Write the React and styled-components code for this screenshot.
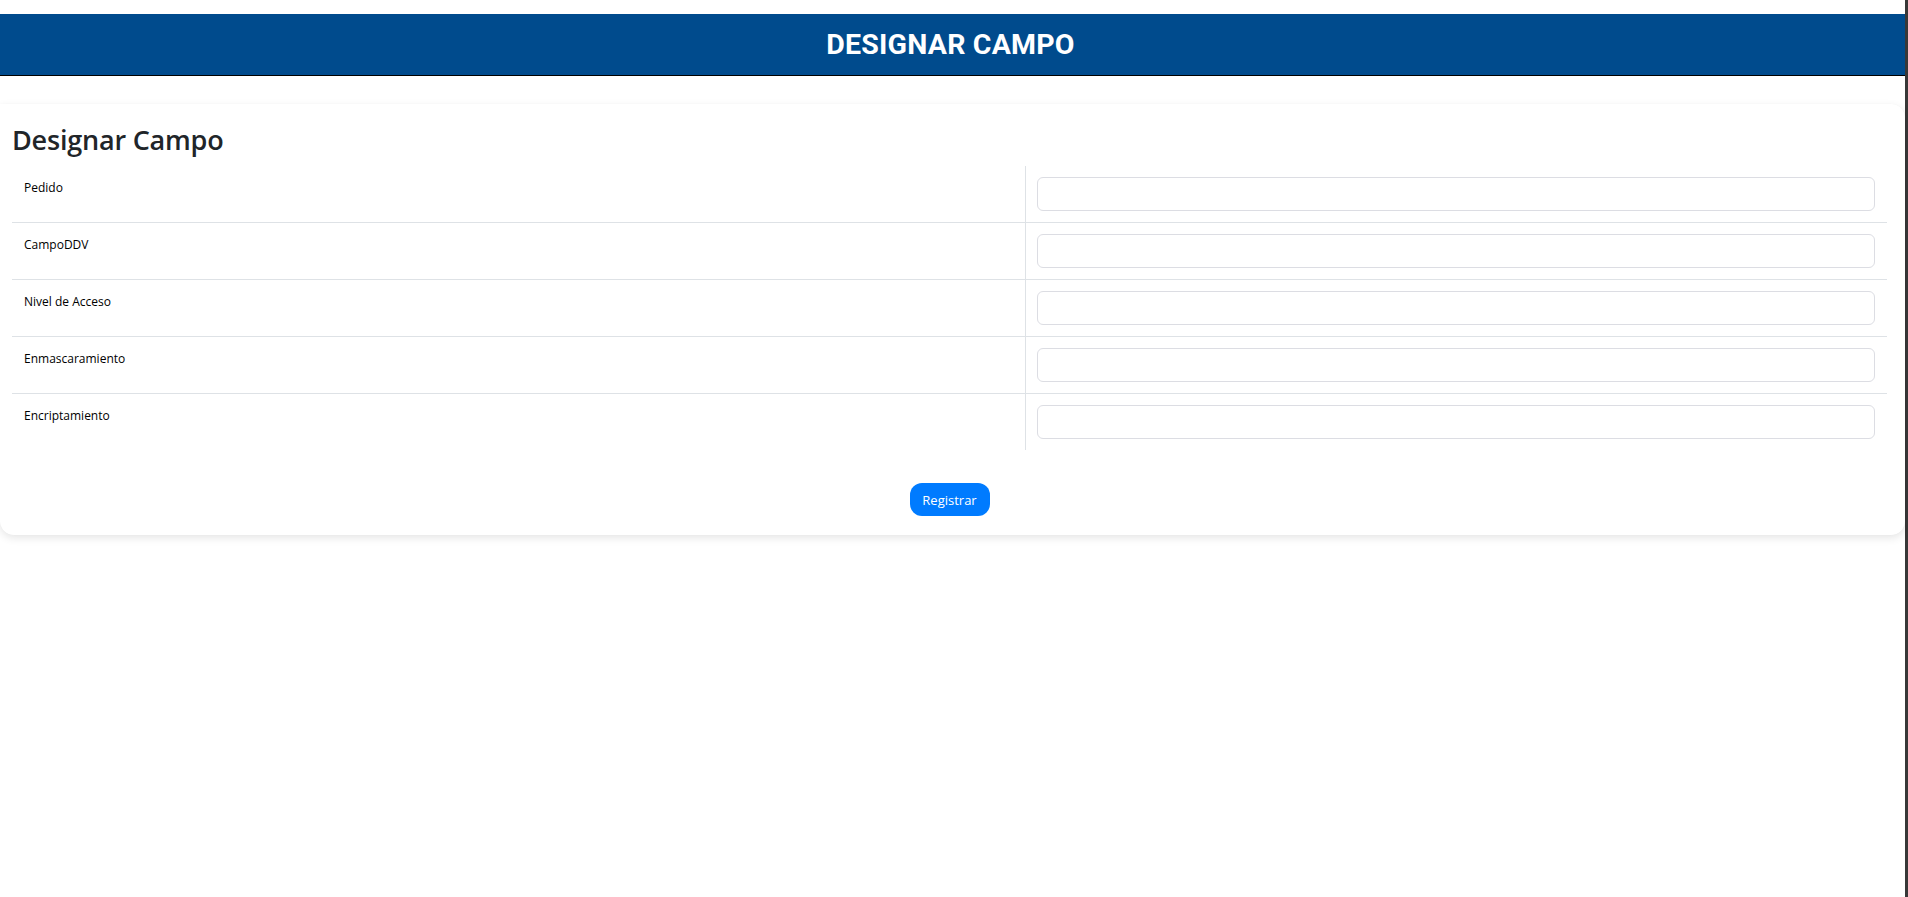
import React from 'react';
import styled, { createGlobalStyle } from 'styled-components';

const GlobalStyle = createGlobalStyle`
	html, body {
		margin: 0;
		padding: 0;
		background: #ffffff;
	}

	* {
		box-sizing: border-box;
	}
`;

const Page = styled.div`
	min-height: 100vh;
	width: 1908px;
	border-right: 3px solid #383838;
	padding-top: 14px;
	font-family: 'Open Sans', 'Noto Sans', sans-serif;
`;

const Header = styled.header`
	height: 62px;
	background: #004b8d;
	border-bottom: 1px solid #000000;
	display: flex;
	align-items: center;
	justify-content: center;
`;

const HeaderTitle = styled.h1`
	margin: 0 4px 0 0;
	color: #ffffff;
	font-family: Roboto, 'Liberation Sans', sans-serif;
	font-weight: 700;
	font-size: 28.5px;
	letter-spacing: 0.2px;
`;

const Card = styled.section`
	margin-top: 28px;
	background: #ffffff;
	border-radius: 0 14px 14px 14px;
	box-shadow: 0 3px 8px rgba(0, 0, 0, 0.1), 0 0 1px rgba(0, 0, 0, 0.04);
	padding: 19px 18px 19px 12px;
`;

const Title = styled.h2`
	margin: 0 0 9px 0;
	font-size: 27px;
	font-weight: 600;
	color: #212529;
	line-height: 34px;
	letter-spacing: -0.2px;
`;

const Table = styled.div`
	display: grid;
	grid-template-columns: 1013px 1fr;
`;

const Cell = styled.div`
	padding: 11px ${(p) => (p.right ? '12px 11px 11px' : '12px')};
	border-top: ${(p) => (p.first ? 'none' : '1px solid #dee2e6')};
	border-left: ${(p) => (p.right ? '1px solid #dee2e6' : 'none')};
`;

const Label = styled.span`
	display: block;
	font-size: 12px;
	line-height: 21px;
	color: #000000;
`;

const Input = styled.input`
	display: block;
	width: 100%;
	height: 34px;
	border: 1px solid #dcdde3;
	border-radius: 6px;
	background: #ffffff;
	outline: none;
	font-size: 14px;
	padding: 6px 12px;
`;

const Actions = styled.div`
	display: flex;
	justify-content: center;
	margin-top: 33px;
`;

const Button = styled.button`
	width: 80px;
	height: 33px;
	border: none;
	border-radius: 12px;
	background: #007bff;
	color: #ffffff;
	font-family: 'Open Sans', 'Noto Sans', sans-serif;
	font-size: 13px;
	cursor: pointer;
`;

const fields = ['Pedido', 'CampoDDV', 'Nivel de Acceso', 'Enmascaramiento', 'Encriptamiento'];

function App() {
  return (
    <Page>
      <GlobalStyle />
      <Header>
        <HeaderTitle>DESIGNAR CAMPO</HeaderTitle>
      </Header>
      <Card>
        <Title>Designar Campo</Title>
        <Table>
          {fields.map((f, i) => (
            <React.Fragment key={f}>
              <Cell first={i === 0}>
                <Label>{f}</Label>
              </Cell>
              <Cell first={i === 0} right>
                <Input type="text" />
              </Cell>
            </React.Fragment>
          ))}
        </Table>
        <Actions>
          <Button>Registrar</Button>
        </Actions>
      </Card>
    </Page>
  );
}

export default App;
